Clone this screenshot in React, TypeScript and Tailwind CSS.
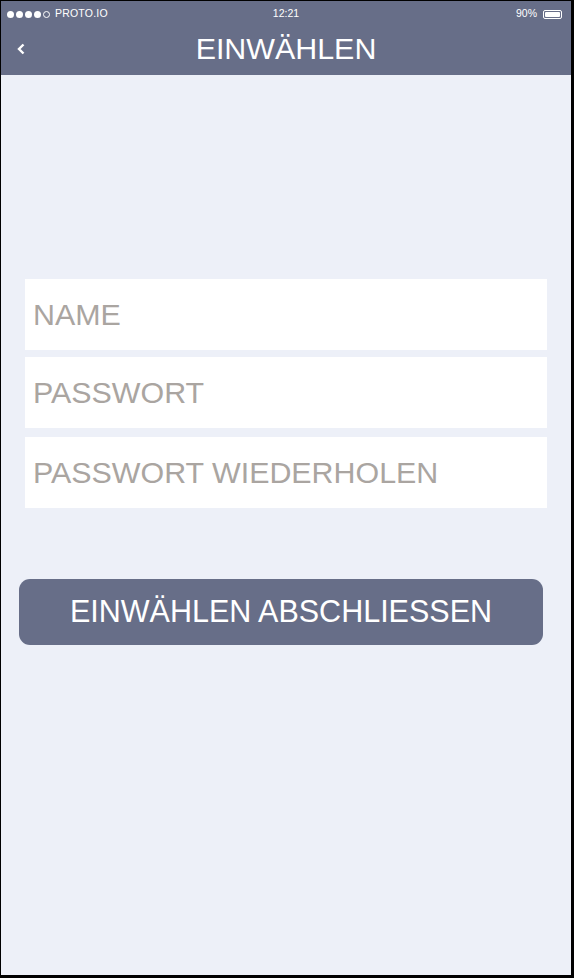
const FIELDS = ["NAME", "PASSWORT", "PASSWORT WIEDERHOLEN"];

function StatusBar() {
  return (
    <div className="relative flex h-6 items-center pl-[6px] pr-[9px] pt-[2px] text-[10.5px] text-white">
      <div className="flex items-center gap-[2px]">
        {[0, 1, 2, 3].map((i) => (
          <span key={i} className="h-[7px] w-[7px] rounded-full bg-white" />
        ))}
        <span className="h-[7px] w-[7px] rounded-full border border-white" />
        <span className="ml-[3px] tracking-[0.2px]">PROTO.IO</span>
      </div>
      <span className="absolute left-1/2 -translate-x-1/2">12:21</span>
      <div className="ml-auto flex items-center gap-[6px]">
        <span>90%</span>
        <span className="flex h-[9px] w-[19px] items-center rounded-[2px] border border-white p-[1px]">
          <span className="h-full w-full rounded-[1px] bg-white" />
        </span>
      </div>
    </div>
  );
}

function NavBar() {
  return (
    <div className="relative flex h-[50px] items-center justify-center pb-[4px]">
      <svg className="absolute left-[14px] top-[17px]" width="12" height="14" viewBox="0 0 12 14">
        <path d="M8.5 2.5 L4 7 L8.5 11.5" fill="none" stroke="white" strokeWidth="2.4" />
      </svg>
      <h1 className="text-[30.4px] leading-none text-white">EINWÄHLEN</h1>
    </div>
  );
}

export default function App() {
  return (
    <div
      className="h-[978px] w-[574px] bg-black pb-[3px] pl-[1px] pr-[3px] pt-[1px]"
      style={{ fontFamily: '"Liberation Sans", Arial, sans-serif' }}
    >
      <div className="flex h-full flex-col bg-[#edf0f8]">
        <header className="bg-[#676e88]">
          <StatusBar />
          <NavBar />
        </header>

        <div className="mx-6 mt-[204px] flex flex-col">
          {FIELDS.map((label, i) => (
            <div
              key={label}
              className={`flex h-[71px] items-center bg-white px-2 ${i === 1 ? "mt-[7px]" : i === 2 ? "mt-[9px]" : ""}`}
            >
              <span className="text-[30.4px] leading-none text-[#aaa5a1]">{label}</span>
            </div>
          ))}
        </div>

        <button className="ml-[18px] mt-[71px] flex h-[66px] w-[524px] items-center justify-center rounded-[11px] bg-[#676e88] text-[30.5px] text-white">
          EINWÄHLEN ABSCHLIESSEN
        </button>
      </div>
    </div>
  );
}
